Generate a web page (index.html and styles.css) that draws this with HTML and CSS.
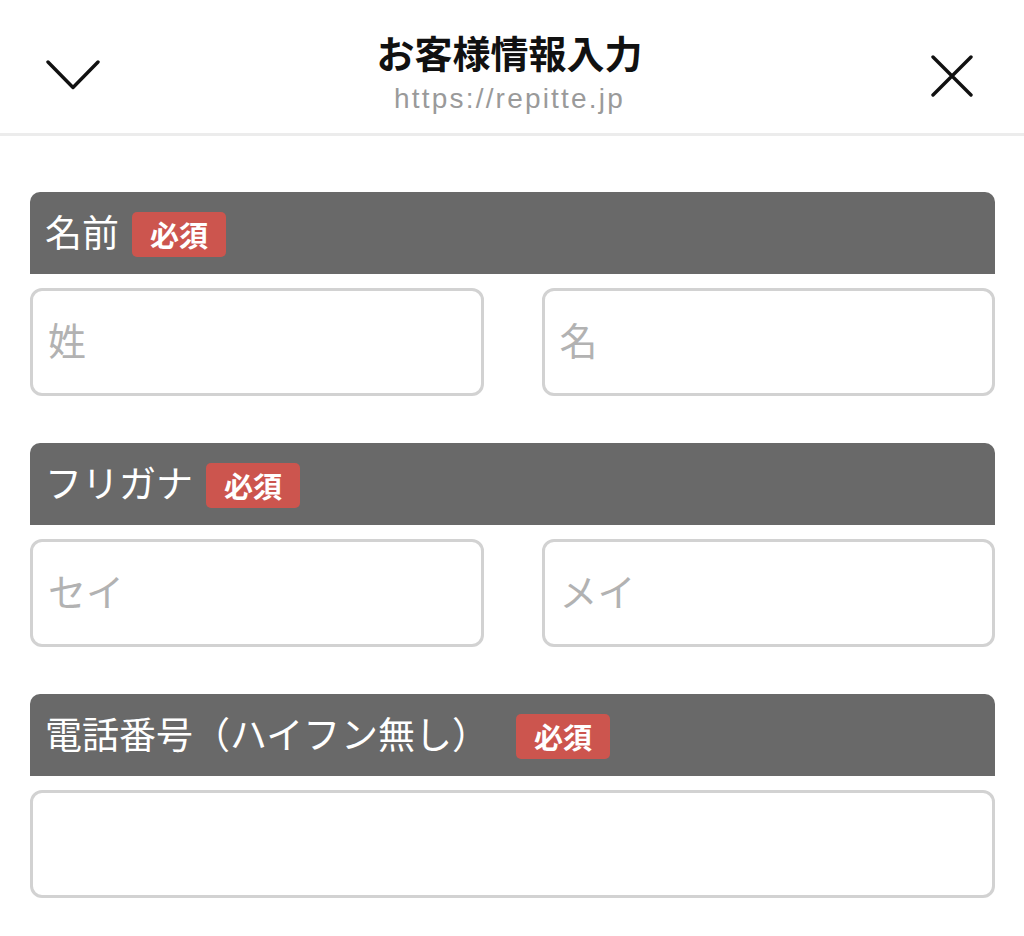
FILE: index.html
```html
<!DOCTYPE html>
<html lang="ja">
<head>
<meta charset="utf-8">
<title>お客様情報入力</title>
<link rel="stylesheet" href="styles.css">
</head>
<body>
<header class="topbar">
  <button class="icon-btn icon-down" aria-label="閉じる">
    <svg width="54" height="30" viewBox="0 0 54 30"><polyline points="2,2 27,27.5 52,2" fill="none" stroke="#111" stroke-width="3.4" stroke-linecap="round" stroke-linejoin="round"/></svg>
  </button>
  <div class="titles">
    <h1 class="title">お客様情報入力</h1>
    <p class="url">https://repitte.jp</p>
  </div>
  <button class="icon-btn icon-close" aria-label="閉じる">
    <svg width="42" height="42" viewBox="0 0 42 42"><path d="M2 2 L40 40 M40 2 L2 40" fill="none" stroke="#111" stroke-width="3.4" stroke-linecap="round"/></svg>
  </button>
</header>

<main class="form">
  <section class="field">
    <div class="field-head"><span class="label">名前</span><span class="badge">必須</span></div>
    <div class="inputs two">
      <input class="text-input" type="text" placeholder="姓">
      <input class="text-input" type="text" placeholder="名">
    </div>
  </section>

  <section class="field">
    <div class="field-head"><span class="label">フリガナ</span><span class="badge">必須</span></div>
    <div class="inputs two">
      <input class="text-input" type="text" placeholder="セイ">
      <input class="text-input" type="text" placeholder="メイ">
    </div>
  </section>

  <section class="field">
    <div class="field-head"><span class="label label-wide">電話番号（ハイフン無し）</span><span class="badge">必須</span></div>
    <div class="inputs">
      <input class="text-input" type="tel">
    </div>
  </section>
</main>
</body>
</html>
```

FILE: styles.css
```css
* { box-sizing: border-box; }

html, body {
  margin: 0;
  padding: 0;
  background: #ffffff;
  font-family: "Noto Sans CJK JP", "Noto Sans", sans-serif;
}

.topbar {
  height: 136px;
  border-bottom: 3px solid #ececec;
  display: grid;
  grid-template-columns: 1fr auto 1fr;
  align-items: start;
  padding: 0 51px 0 46px;
}

.icon-btn {
  background: none;
  border: 0;
  padding: 0;
  display: flex;
  cursor: pointer;
}
.icon-down { justify-self: start; margin-top: 60px; }
.icon-close { justify-self: end; margin-top: 55px; }

.titles {
  display: flex;
  flex-direction: column;
  align-items: center;
  margin-top: 29px;
}

.title {
  margin: 0;
  font-size: 38px;
  line-height: 46px;
  font-weight: 700;
  color: #111;
}

.url {
  margin: 7px 0 0;
  font-family: "Liberation Sans", Arial, sans-serif;
  font-size: 28px;
  line-height: 34px;
  letter-spacing: 2.2px;
  color: #9a9a9a;
}

.form {
  padding: 56px 29px 40px 30px;
  display: flex;
  flex-direction: column;
  gap: 47px;
}

.field {
  display: flex;
  flex-direction: column;
  gap: 14px;
}

.field-head {
  height: 82px;
  background: #696969;
  border-radius: 10px 10px 0 0;
  display: flex;
  align-items: center;
  padding-left: 15px;
}

.label {
  color: #ffffff;
  font-size: 37px;
  line-height: 46px;
  font-weight: 400;
  margin-top: -4px;
}

.label-wide { margin-right: 14px; }

.badge {
  margin-left: 13px;
  margin-top: 2px;
  height: 45px;
  padding: 0 18px;
  border-radius: 5px;
  background: #cc554e;
  color: #ffffff;
  font-size: 29px;
  line-height: 45px;
  font-weight: 700;
}

.inputs {
  display: grid;
  grid-template-columns: 1fr;
}
.inputs.two {
  grid-template-columns: 1fr 1fr;
  gap: 58px;
}

.text-input {
  height: 108px;
  width: 100%;
  border: 3px solid #d2d2d2;
  border-radius: 12px;
  background: #ffffff;
  padding: 0 15px 8px;
  font-family: "Noto Sans CJK JP", "Noto Sans", sans-serif;
  font-size: 38px;
  color: #333;
  outline: none;
}
.text-input::placeholder {
  color: #b2b2b2;
}
```
